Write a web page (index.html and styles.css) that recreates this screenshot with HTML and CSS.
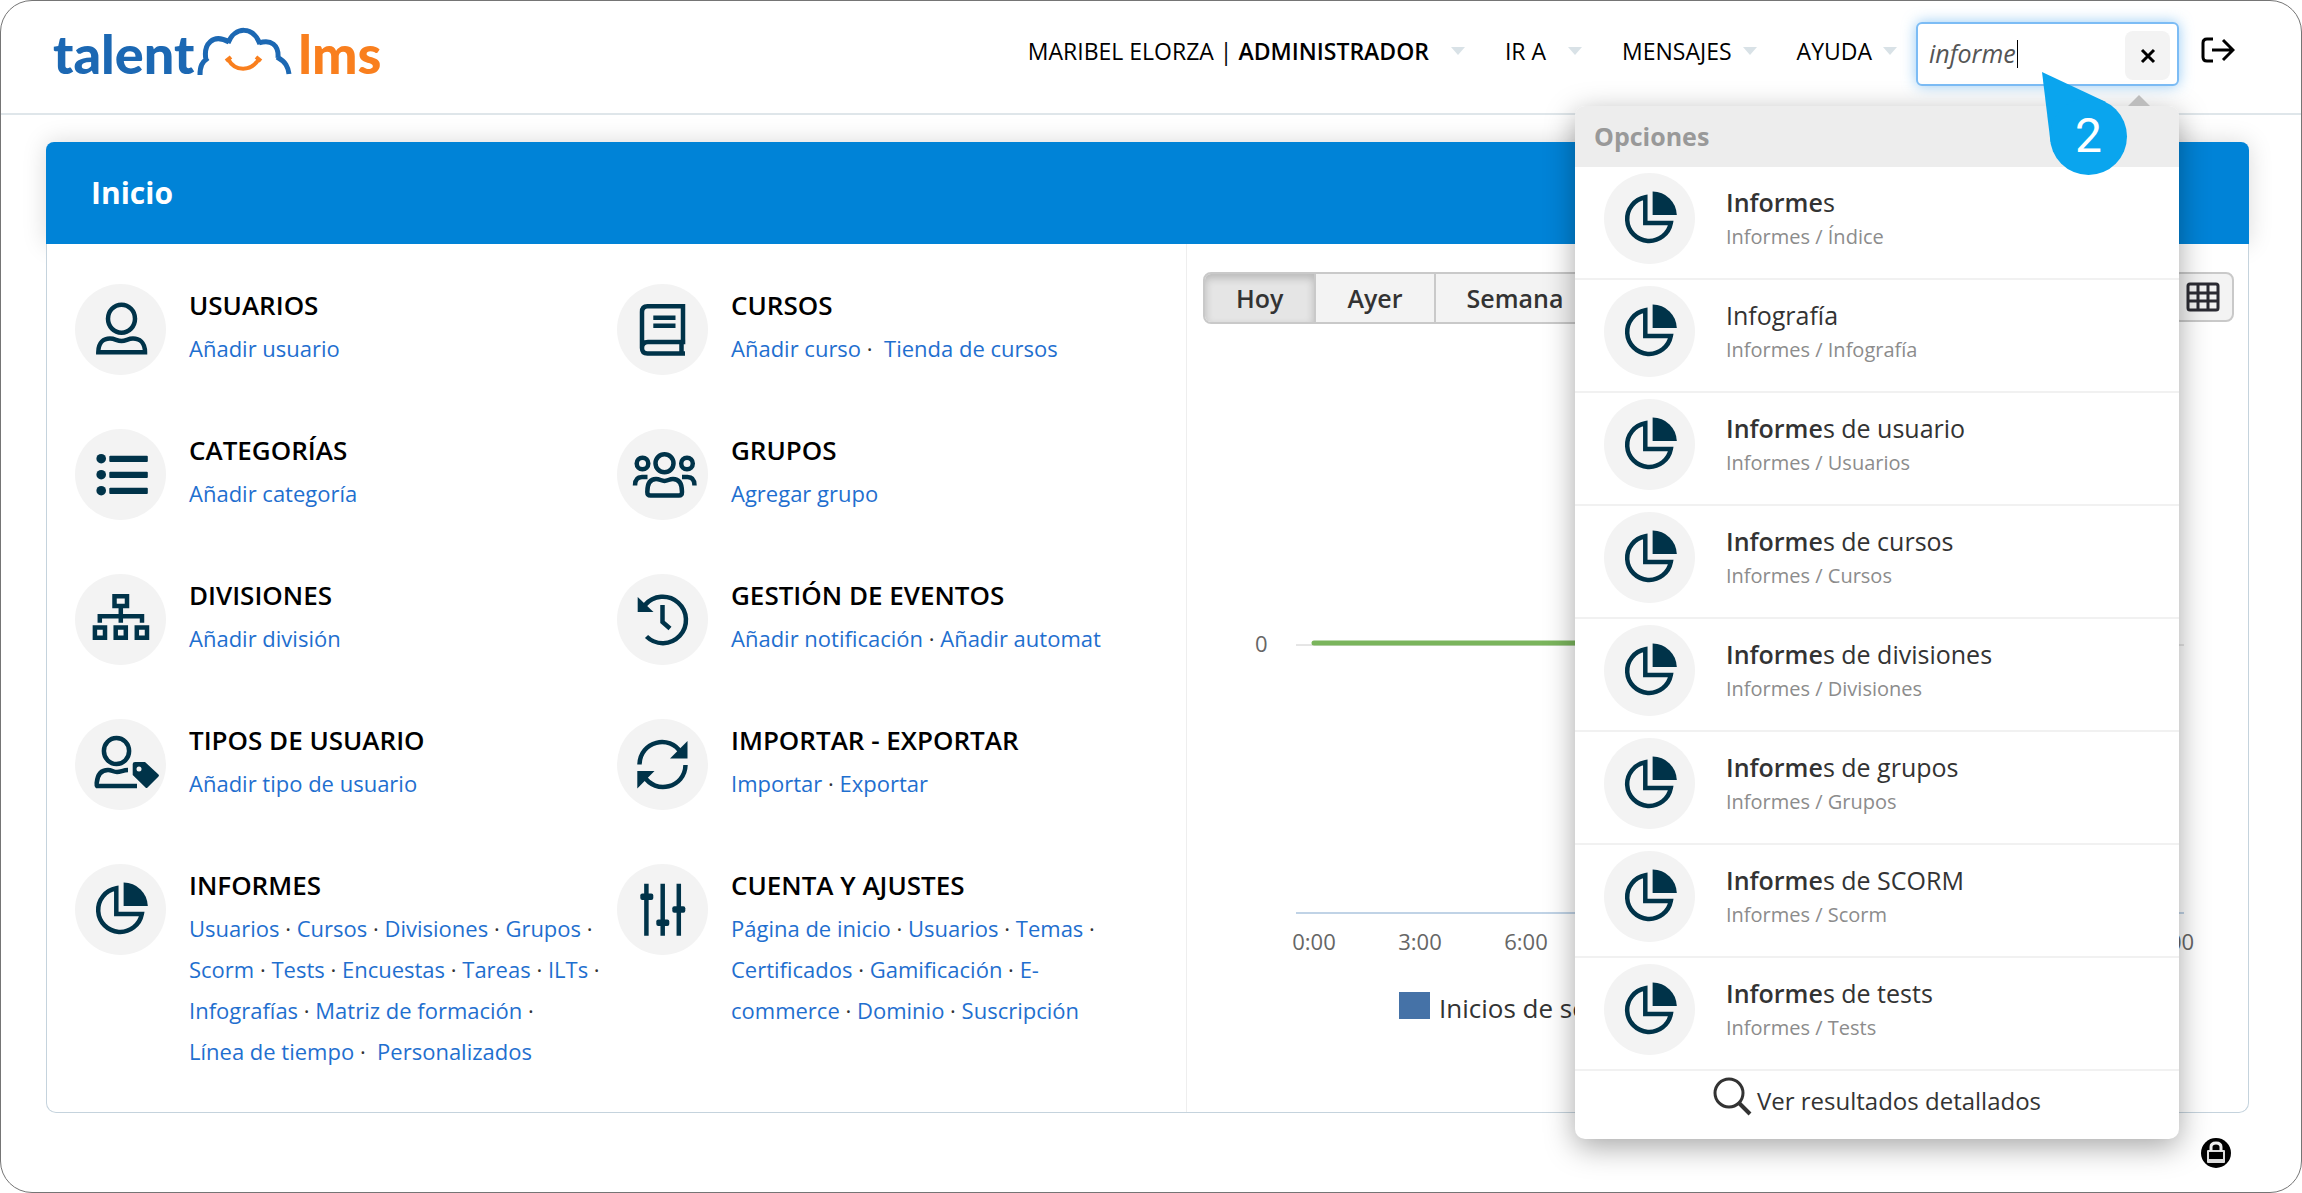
FILE: index.html
```html
<!DOCTYPE html>
<html lang="es">
<head>
    <meta charset="UTF-8">
    <meta name="viewport" content="width=device-width, initial-scale=1.0">
    <title>Inicio | TalentLMS</title>
    <link rel="stylesheet" href="styles.css">
</head>
<body>
    <!-- iconos compartidos -->
    <svg class="sprite" aria-hidden="true">
        <symbol id="icon-pie" viewBox="0 0 91 91">
            <path class="line" d="M41.3 24.3V50H66.8A22 22 0 1 1 41.3 24.3z"/>
            <path class="solid" d="M48.6 18.6A24 24 0 0 1 72.8 42.1H48.6z"/>
        </symbol>
    </svg>

    <div class="page">
        <header class="topbar">
            <a href="#" class="logo" aria-label="TalentLMS">
                <span class="logo-talent">talent</span>
                <svg class="logo-cloud" viewBox="0 0 104 50">
                    <path d="M6 48C6 39 8 35 14 31M12 33C9 17 19 6 35 15M34 16C41 -1 59 -1 66 17M65 16C77 12 85 18 84 31M83 30C92 35 94 40 95 47" fill="none" stroke="#1c68b3" stroke-width="5"/>
                    <path d="M32 34L37 30M67 34L62 30M34 32C41 45 57 45 65 32" fill="none" stroke="#f97f1e" stroke-width="4"/>
                </svg>
                <span class="logo-lms">lms</span>
            </a>
            <nav class="nav">
                <a href="#" class="nav-item wide">MARIBEL ELORZA | <b>ADMINISTRADOR</b></a>
                <a href="#" class="nav-item wide">IR A</a>
                <a href="#" class="nav-item">MENSAJES</a>
                <a href="#" class="nav-item">AYUDA</a>
            </nav>
            <div class="search">
                <input type="text" id="search" class="search-input" value="informe" aria-label="Buscar">
                <span class="search-caret"></span>
                <button type="button" class="search-clear" aria-label="Borrar">
                    <svg viewBox="0 0 16 16" width="16" height="16"><path d="M2 2L14 14M14 2L2 14" stroke="#000" stroke-width="3"/></svg>
                </button>

                <div class="results">
                    <h2 class="results-title">Opciones</h2>
                    <a href="#" class="result">
                        <svg class="icon"><use href="#icon-pie"/></svg>
                        <span class="result-text"><span class="result-name"><b>Informe</b>s</span><span class="result-path">Informes / Índice</span></span>
                    </a>
                    <a href="#" class="result">
                        <svg class="icon"><use href="#icon-pie"/></svg>
                        <span class="result-text"><span class="result-name">Infografía</span><span class="result-path">Informes / Infografía</span></span>
                    </a>
                    <a href="#" class="result">
                        <svg class="icon"><use href="#icon-pie"/></svg>
                        <span class="result-text"><span class="result-name"><b>Informe</b>s de usuario</span><span class="result-path">Informes / Usuarios</span></span>
                    </a>
                    <a href="#" class="result">
                        <svg class="icon"><use href="#icon-pie"/></svg>
                        <span class="result-text"><span class="result-name"><b>Informe</b>s de cursos</span><span class="result-path">Informes / Cursos</span></span>
                    </a>
                    <a href="#" class="result">
                        <svg class="icon"><use href="#icon-pie"/></svg>
                        <span class="result-text"><span class="result-name"><b>Informe</b>s de divisiones</span><span class="result-path">Informes / Divisiones</span></span>
                    </a>
                    <a href="#" class="result">
                        <svg class="icon"><use href="#icon-pie"/></svg>
                        <span class="result-text"><span class="result-name"><b>Informe</b>s de grupos</span><span class="result-path">Informes / Grupos</span></span>
                    </a>
                    <a href="#" class="result">
                        <svg class="icon"><use href="#icon-pie"/></svg>
                        <span class="result-text"><span class="result-name"><b>Informe</b>s de SCORM</span><span class="result-path">Informes / Scorm</span></span>
                    </a>
                    <a href="#" class="result">
                        <svg class="icon"><use href="#icon-pie"/></svg>
                        <span class="result-text"><span class="result-name"><b>Informe</b>s de tests</span><span class="result-path">Informes / Tests</span></span>
                    </a>
                    <a href="#" class="results-more">
                        <svg viewBox="0 0 40 40" width="40" height="40"><circle cx="16" cy="16" r="14" fill="none" stroke="#333" stroke-width="3"/><path d="M26 26L37 37" stroke="#333" stroke-width="4"/></svg>
                        Ver resultados detallados
                    </a>
                </div>

                <!-- marcador del paso 2 -->
                <div class="step">
                    <svg viewBox="0 0 86 104" width="86" height="104"><path d="M0 0L64 30L8.500 70z" fill="#0aa5ee"/><circle cx="46.500" cy="64.500" r="38.500" fill="#0aa5ee"/></svg>
                    <span class="step-number">2</span>
                </div>
            </div>
            <a href="#" class="logout" aria-label="Salir">
                <svg viewBox="0 0 34 26" width="34" height="26"><path d="M12 2H6Q2 2 2 6V20Q2 24 6 24H12M11 13H31M22 3L32 13L22 23" fill="none" stroke="#000" stroke-width="3"/></svg>
            </a>
        </header>

        <main class="panel">
            <h1 class="panel-title">Inicio</h1>
            <div class="panel-body">
                <div class="menu">
                    <section class="menu-item">
                        <svg class="icon" viewBox="0 0 91 91">
                            <ellipse class="line" cx="46.500" cy="34.700" rx="13.500" ry="14"/>
                            <path class="line" d="M23.300 68.200C23.300 58 29 54.500 35 54.500C40 54.500 42 57 46.500 57C51 57 53 54.500 58 54.500C64 54.500 70 58 70 68.200z"/>
                        </svg>
                        <div>
                            <h3>USUARIOS</h3>
                            <p><a href="#">Añadir usuario</a></p>
                        </div>
                    </section>
                    <section class="menu-item">
                        <svg class="icon" viewBox="0 0 91 91">
                            <path class="line" d="M66 58V22.200H30.500Q25 22.200 25 28V64Q25 69.500 30.500 69.500H68M25 64Q25 58 31 58H68.300M64.500 58V69"/>
                            <path class="line" d="M36.300 33.800H58.500M36.300 41.700H58.500"/>
                        </svg>
                        <div>
                            <h3>CURSOS</h3>
                            <p><a href="#">Añadir curso</a> ·&nbsp; <a href="#">Tienda de cursos</a></p>
                        </div>
                    </section>
                    <section class="menu-item">
                        <svg class="icon" viewBox="0 0 91 91">
                            <g class="solid"><circle cx="26.200" cy="29.700" r="4.800"/><circle cx="26.200" cy="45.700" r="4.800"/><circle cx="26.200" cy="61.700" r="4.800"/>
                            <rect x="34.300" y="26.700" width="38.500" height="6.200" rx="1"/><rect x="34.300" y="42.700" width="38.500" height="6.200" rx="1"/><rect x="34.300" y="58.700" width="38.500" height="6.200" rx="1"/></g>
                        </svg>
                        <div>
                            <h3>CATEGORÍAS</h3>
                            <p><a href="#">Añadir categoría</a></p>
                        </div>
                    </section>
                    <section class="menu-item">
                        <svg class="icon" viewBox="0 0 91 91">
                            <circle class="line" cx="47.500" cy="34.300" r="9"/>
                            <circle class="line" cx="25.500" cy="34.500" r="5.800"/>
                            <circle class="line" cx="70" cy="34.500" r="5.800"/>
                            <path class="line" d="M30.300 63C30.300 54 33 50 39 50C43 50 44 52 47.500 52C51 52 52 50 56 50C62 50 65 54 65 63Q65 66.500 62 66.500H33.500Q30.300 66.500 30.300 63zM18 56.500C18 50 21 48 25 48H30.500M77.500 56.500C77.500 50 74.500 48 70.500 48H65"/>
                        </svg>
                        <div>
                            <h3>GRUPOS</h3>
                            <p><a href="#">Agregar grupo</a></p>
                        </div>
                    </section>
                    <section class="menu-item">
                        <svg class="icon" viewBox="0 0 91 91">
                            <path class="line" d="M39.500 22.300H52V32H39.500zM19.900 53.500H30V63.700H19.900zM40.700 53.500H50.800V63.700H40.700zM61.800 53.500H72V63.700H61.800zM45.800 34V48.700M24.800 48.700V42.300H67V48.700"/>
                        </svg>
                        <div>
                            <h3>DIVISIONES</h3>
                            <p><a href="#">Añadir división</a></p>
                        </div>
                    </section>
                    <section class="menu-item">
                        <svg class="icon" viewBox="0 0 91 91">
                            <path class="line" d="M28 31A23.200 23.200 0 1 1 29.500 62.500M45.500 31V48L53 54.500"/>
                            <path class="solid" d="M20.700 23L36.500 38H20.700z"/>
                        </svg>
                        <div>
                            <h3>GESTIÓN DE EVENTOS</h3>
                            <p><a href="#">Añadir notificación</a> · <a href="#">Añadir automat</a></p>
                        </div>
                    </section>
                    <section class="menu-item">
                        <svg class="icon" viewBox="0 0 91 91">
                            <ellipse class="line" cx="41.500" cy="32" rx="12.600" ry="13"/>
                            <path class="line" d="M62 67H22Q21.500 66.500 21.700 64C22.500 55 26 51 33 51C37 51 38 53 42 53C46 53 48 51 53 51"/>
                            <path class="solid" d="M57.700 45Q57.700 43 60 43H70L83.500 55.500Q84.500 56.500 83.500 57.500L72.500 68.500Q71.500 69.500 70.500 68.500L57.700 56z"/>
                            <circle cx="64" cy="50" r="2.500" fill="#f3f3f3"/>
                        </svg>
                        <div>
                            <h3>TIPOS DE USUARIO</h3>
                            <p><a href="#">Añadir tipo de usuario</a></p>
                        </div>
                    </section>
                    <section class="menu-item">
                        <svg class="icon" viewBox="0 0 91 91">
                            <path class="line" d="M22.500 45.500C23 22 53 15 64 34M68.500 46C68 69 38 76 27 57"/>
                            <path class="solid" d="M70.500 22V39.500H53zM20.300 69.500V52H37.500z"/>
                        </svg>
                        <div>
                            <h3>IMPORTAR - EXPORTAR</h3>
                            <p><a href="#">Importar</a> · <a href="#">Exportar</a></p>
                        </div>
                    </section>
                    <section class="menu-item">
                        <svg class="icon"><use href="#icon-pie"/></svg>
                        <div>
                            <h3>INFORMES</h3>
                            <p><a href="#">Usuarios</a> · <a href="#">Cursos</a> · <a href="#">Divisiones</a> · <a href="#">Grupos</a> ·<br>
                            <a href="#">Scorm</a> · <a href="#">Tests</a> · <a href="#">Encuestas</a> · <a href="#">Tareas</a> · <a href="#">ILTs</a> ·<br>
                            <a href="#">Infografías</a> · <a href="#">Matriz de formación</a> ·<br>
                            <a href="#">Línea de tiempo</a> ·&nbsp; <a href="#">Personalizados</a></p>
                        </div>
                    </section>
                    <section class="menu-item">
                        <svg class="icon" viewBox="0 0 91 91">
                            <path class="line" d="M29.400 19.700V71.700M45.700 19.700V71.700M61.800 19.700V71.700"/>
                            <g class="solid"><rect x="23.300" y="29.500" width="13" height="6.500" rx="2"/><rect x="39.300" y="55.500" width="13" height="6.500" rx="2"/><rect x="55.300" y="42.300" width="13" height="6.500" rx="2"/></g>
                        </svg>
                        <div>
                            <h3>CUENTA Y AJUSTES</h3>
                            <p><a href="#">Página de inicio</a> · <a href="#">Usuarios</a> · <a href="#">Temas</a> ·<br>
                            <a href="#">Certificados</a> · <a href="#">Gamificación</a> · <a href="#">E-<br>
                            commerce</a> · <a href="#">Dominio</a> · <a href="#">Suscripción</a></p>
                        </div>
                    </section>
                </div>

                <div class="stats">
                    <div class="toolbar">
                        <div class="range">
                            <button type="button" class="active">Hoy</button>
                            <button type="button">Ayer</button>
                            <button type="button">Semana</button>
                            <button type="button">Mes</button>
                        </div>
                        <button type="button" class="grid-btn" aria-label="Tabla">
                            <svg viewBox="0 0 34 30" width="34" height="30"><path d="M2 4Q2 2 4 2H30Q32 2 32 4V26Q32 28 30 28H4Q2 28 2 26zM2 11H32M2 19H32M12 2V28M22 2V28" fill="none" stroke="#2b2b33" stroke-width="3"/></svg>
                        </button>
                    </div>
                    <svg class="chart" viewBox="0 0 1061 720">
                        <path d="M109 321H997" stroke="#ccc" stroke-width="1"/>
                        <path d="M109 589H997" stroke="#c0d3e6" stroke-width="2"/>
                        <path d="M127 319H979" stroke="#7ab55c" stroke-width="5" stroke-linecap="round"/>
                        <text x="68" y="328">0</text>
                        <g text-anchor="middle">
                            <text x="127" y="626">0:00</text>
                            <text x="233" y="626">3:00</text>
                            <text x="339" y="626">6:00</text>
                            <text x="446" y="626">9:00</text>
                            <text x="979" y="626">24:00</text>
                        </g>
                        <rect x="212" y="668" width="31" height="27" fill="#4572a7"/>
                        <text x="252" y="694" class="legend">Inicios de sesión</text>
                    </svg>
                </div>
            </div>
        </main>

        <footer class="footer">
            <svg viewBox="0 0 30 30" width="30" height="30"><circle cx="15" cy="15" r="15"/><rect x="6" y="12" width="18" height="13" rx="1" fill="#ddd"/><path d="M10 13V9Q10 5 15 5Q20 5 20 9V13" fill="none" stroke="#eee" stroke-width="3"/><rect x="8" y="14" width="14" height="7"/></svg>
        </footer>
    </div>
</body>
</html>
```
FILE: styles.css
```css
* {
    box-sizing: border-box;
}
body {
    margin: 0;
    font-family: "Open Sans", "Noto Sans", sans-serif;
    font-size: 22px;
    color: #333;
    background-color: #fff;
}
a {
    color: #1f6fcf;
    text-decoration: none;
}
h1, h2, h3, p {
    margin: 0;
}
button {
    font-family: inherit;
    cursor: pointer;
}
.sprite {
    display: none;
}
.page {
    min-height: 100vh;
    border: 1px solid #757575;
    border-radius: 32px;
}

/* cabecera */
.topbar {
    display: flex;
    align-items: flex-start;
    height: 114px;
    padding: 21px 66px 0 52px;
    border-bottom: 2px solid #dfe6ea;
}
.logo {
    display: flex;
    font-family: Lato, sans-serif;
    font-size: 54px;
    font-weight: 900;
    line-height: 64px;
}
.logo-talent {
    color: #1c68b3;
}
.logo-lms {
    color: #f97f1e;
}
.logo-cloud {
    width: 104px;
    height: 50px;
    margin-top: 5px;
}
.nav {
    display: flex;
    gap: 40px;
    margin-left: auto;
    margin-right: 19px;
}
.nav-item {
    display: flex;
    align-items: center;
    white-space: pre;
    font-size: 23px;
    line-height: 58px;
    color: #000;
}
.nav-item b {
    font-weight: 600;
}
.nav-item::after {
    content: "";
    margin-left: 11px;
    border: 7px solid transparent;
    border-top: 8px solid #d9e2e7;
    border-bottom: 0;
}
.nav-item.wide::after {
    margin-left: 22px;
}
.search {
    position: relative;
    width: 263px;
}
.search-input {
    display: block;
    width: 100%;
    height: 64px;
    padding: 0 60px 2px 11px;
    font-family: inherit;
    font-size: 25px;
    font-style: italic;
    color: #555;
    border: 2px solid #7cbcf5;
    border-radius: 6px;
    outline: none;
    box-shadow: 0 0 14px rgba(82, 168, 236, 0.6);
}
.search-caret {
    position: absolute;
    top: 18px;
    left: 101px;
    width: 1px;
    height: 28px;
    background-color: #000;
}
.search-clear {
    position: absolute;
    top: 9px;
    right: 9px;
    display: flex;
    align-items: center;
    justify-content: center;
    width: 45px;
    height: 49px;
    padding: 0;
    background-color: #f3f3f3;
    border: none;
    border-radius: 8px;
}
.logout {
    margin: 15px 0 0 22px;
}
.logout svg, .footer svg {
    display: block;
}

/* resultados de la búsqueda */
.results {
    position: absolute;
    top: 84px;
    right: 0;
    z-index: 10;
    width: 604px;
    background-color: #fff;
    border-radius: 10px;
    box-shadow: 0 8px 30px rgba(0, 0, 0, 0.35);
}
.results::before {
    content: "";
    position: absolute;
    top: -11px;
    right: 29px;
    border: 11px solid transparent;
    border-top: 0;
    border-bottom-color: #bdbdbd;
}
.results-title {
    padding-left: 19px;
    font-size: 25px;
    line-height: 61px;
    color: #999;
    background-color: #ededed;
    border-radius: 10px 10px 0 0;
}
.result {
    display: flex;
    gap: 31px;
    height: 113px;
    padding: 6px 29px;
    color: #333;
    border-bottom: 2px solid #f1f1f1;
}
.result-text {
    padding-top: 11px;
}
.result-name, .result-path {
    display: block;
}
.result-name {
    font-size: 25px;
    line-height: 36px;
}
.result-name b {
    font-weight: 600;
}
.result-path {
    font-size: 20px;
    line-height: 34px;
    color: #8c8c8c;
}
.results-more {
    display: flex;
    justify-content: center;
    gap: 4px;
    height: 68px;
    padding-top: 6px;
    font-size: 24px;
    line-height: 48px;
    color: #333;
}
.step {
    position: absolute;
    top: 50px;
    left: 126px;
    z-index: 20;
}
.step-number {
    position: absolute;
    top: 34px;
    left: 33px;
    font-family: Roboto, sans-serif;
    font-size: 48px;
    line-height: 60px;
    color: #fff;
}

/* panel principal */
.panel {
    margin: 27px 52px 0 45px;
}
.panel-title {
    padding-left: 45px;
    font-size: 30px;
    line-height: 102px;
    color: #fff;
    background-color: #0083d7;
    border-radius: 8px 8px 0 0;
    box-shadow: 0 0 24px rgba(0, 0, 0, 0.15);
}
.panel-body {
    position: relative;
    display: flex;
    background-color: #fff;
    border: 1px solid #c5d3dd;
    border-top: none;
    border-radius: 0 0 10px 10px;
}
.menu {
    flex: 0 0 1140px;
    display: grid;
    grid-template-columns: 542px 1fr;
    row-gap: 54px;
    align-content: start;
    padding: 40px 0 40px 28px;
    border-right: 1px solid #eee;
}
.menu-item {
    display: flex;
    gap: 23px;
    white-space: nowrap;
}
.icon {
    flex: none;
    width: 91px;
    height: 91px;
    background-color: #f3f3f3;
    border-radius: 50%;
}
.line {
    fill: none;
    stroke: #003349;
    stroke-width: 4.5;
}
.solid {
    fill: #003349;
}
.menu-item h3 {
    font-size: 26px;
    font-weight: 600;
    line-height: 42px;
    color: #000;
}
.menu-item p {
    margin-top: 2px;
    line-height: 41px;
}

/* estadísticas */
.stats {
    flex: 1;
    min-width: 0;
}
.toolbar {
    display: flex;
    justify-content: space-between;
    padding: 28px 14px 0 16px;
}
.range {
    display: flex;
    border: 2px solid #c9c9c9;
    border-radius: 8px;
    overflow: hidden;
}
.range button {
    height: 48px;
    padding: 0 31px;
    font-size: 25px;
    font-weight: 600;
    color: #333;
    background-color: #f3f3f3;
    border: none;
    border-right: 2px solid #c9c9c9;
}
.range button.active {
    background-color: #e5e5e5;
    box-shadow: inset 0 4px 8px rgba(0, 0, 0, 0.2);
}
.grid-btn {
    height: 50px;
    padding: 0 12px;
    background-color: #f3f3f3;
    border: 2px solid #c9c9c9;
    border-radius: 8px;
}
.grid-btn svg {
    display: block;
}
.chart {
    display: block;
    width: 100%;
}
.chart text {
    font-size: 22px;
    fill: #666;
}
.chart .legend {
    font-size: 26px;
    fill: #333;
}
.footer {
    display: flex;
    justify-content: flex-end;
    padding: 25px 70px 22px;
}
```
